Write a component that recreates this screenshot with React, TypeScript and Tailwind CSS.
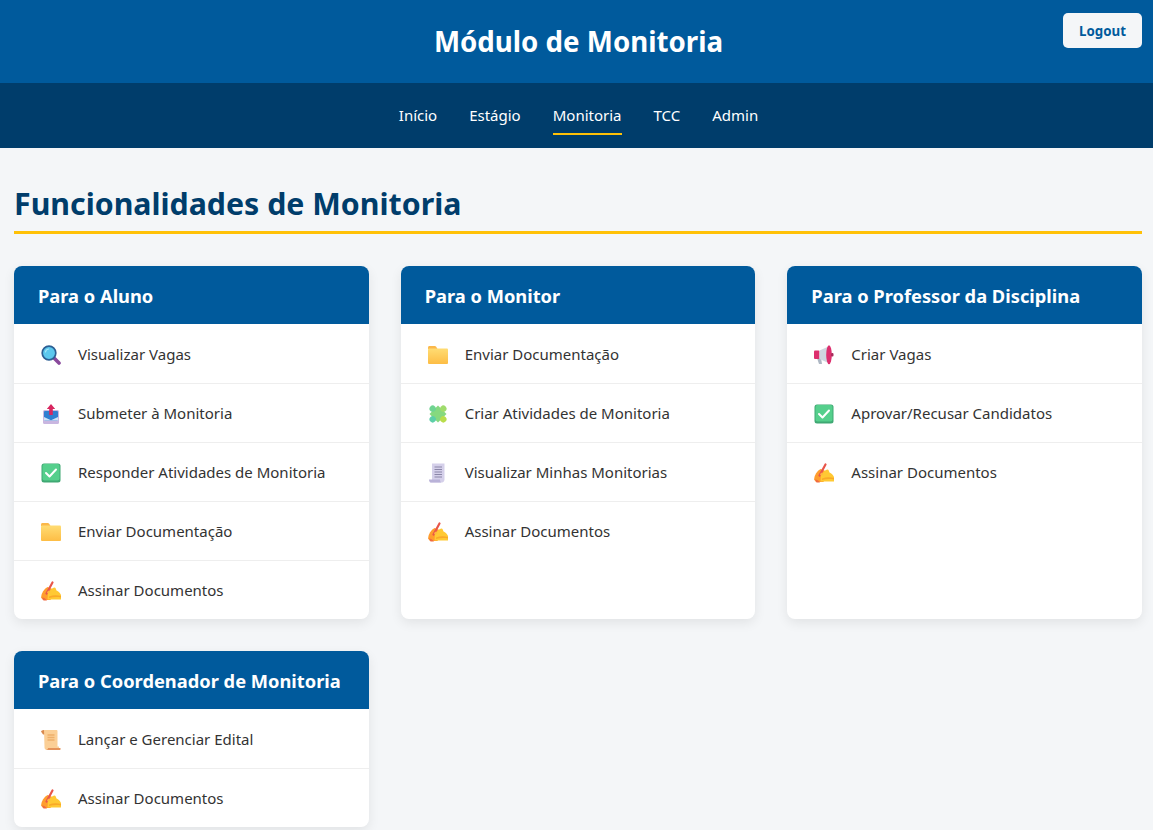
import React from "react";

const MagnifierIcon = () => (
  <svg viewBox="0 0 20 20" className="w-5 h-5">
    <path d="M12.500 12.500l5.500 5.500" stroke="#8a4a9c" strokeWidth="3.600" strokeLinecap="round" />
    <circle cx="8" cy="8" r="6.800" fill="#5cc8ee" stroke="#2c5f94" strokeWidth="1.700" />
    <path d="M4.500 7a3.600 3.600 0 0 1 3-3" stroke="#a9e6f8" strokeWidth="1.200" fill="none" strokeLinecap="round" />
  </svg>
);

const InboxIcon = () => (
  <svg viewBox="0 0 20 20" className="w-5 h-5">
    <rect x="2" y="6" width="16" height="14" rx="1.500" fill="#c9b6e0" />
    <rect x="3" y="7" width="14" height="9.500" rx="1" fill="#2f7fd0" />
    <path d="M3 13l7 3.200 7-3.200v3.500H3z" fill="#cfe2f6" />
    <path d="M10 0l4.200 5h-2.400v6H8.200V5H5.800z" fill="#d8265f" />
  </svg>
);

const CheckIcon = () => (
  <svg viewBox="0 0 20 20" className="w-5 h-5">
    <rect x="0.500" y="0.500" width="19" height="19" rx="2.500" fill="#3fa873" />
    <rect x="1.500" y="1" width="17" height="16.500" rx="2" fill="#55cf8c" />
    <path d="M5 10l3.500 3.500L15 6.500" stroke="#fff" strokeWidth="2" fill="none" strokeLinecap="round" strokeLinejoin="round" />
  </svg>
);

const FolderIcon = () => (
  <svg viewBox="0 0 20 20" className="w-5 h-5">
    <defs>
      <linearGradient id="folderFill" x1="0" y1="0" x2="0" y2="1">
        <stop offset="0" stopColor="#ffdc73" />
        <stop offset="1" stopColor="#fdbd45" />
      </linearGradient>
    </defs>
    <path d="M0 2.500C0 1.700.6 1 1.500 1h5.300c.6 0 1 .3 1.400.8L9.500 4H0z" fill="#fbb84a" />
    <rect x="0" y="3.500" width="20" height="15.500" rx="1" fill="url(#folderFill)" />
  </svg>
);

const SignIcon = () => (
  <svg viewBox="0 0 20 20" className="w-5 h-5">
    <path d="M0 16.500C.5 11.500 3 8 6.500 6l5 2 1 3-3 8H2z" fill="#ff9d2e" />
    <path d="M7 12c2-3 4.500-5.500 6.500-5.500 1.200 0 1.500 1.500 2 3 2 .8 3.500 2.300 4.500 4.500v4.500H6.500z" fill="#ffc933" />
    <path d="M8 15.500c4-1.500 8-1.500 12-.5v1.500c-4-.8-8-.5-12 .5z" fill="#f9a928" />
    <path d="M5.500 12.500L11.500 1.500" stroke="#e8564a" strokeWidth="2.200" strokeLinecap="round" />
    <path d="M7 9.500l2.500 1.500c-1 1.200-2 1.500-3.500 1z" fill="#ffb640" />
    <path d="M1 16.500c2 0 3.500 1 5 3H2.500z" fill="#ef6a42" />
  </svg>
);

const PuzzleIcon = () => (
  <svg viewBox="0 0 20 20" className="w-5 h-5">
    <g transform="rotate(45 10 10)">
      <rect x="4" y="4" width="12" height="12" fill="#86d97f" />
      <circle cx="10" cy="2.500" r="3.200" fill="#9fdc6c" />
      <circle cx="17.500" cy="10" r="3.200" fill="#b9dd4c" />
      <circle cx="10" cy="17.500" r="3.200" fill="#5dcfa8" />
      <circle cx="2.500" cy="10" r="3.200" fill="#70d492" />
    </g>
  </svg>
);

const PageIcon = () => (
  <svg viewBox="0 0 20 20" className="w-5 h-5">
    <path d="M4 .500h12.500v16c0 1.500-1 3-2.500 3H1.500c1.500-.5 2.500-1.500 2.500-3z" fill="#d5d0ea" />
    <path d="M1 16.500h11c0 1.500.5 3 1.500 3H3C1.500 19.500 1 18 1 16.500z" fill="#b9b2d8" />
    <path d="M6.500 4h7.500M6.500 6.500h7.500M6.500 9h7.500M6.500 11.500h7.500M6.500 14h7.500" stroke="#8b86a8" strokeWidth="1" />
  </svg>
);

const MegaphoneIcon = () => (
  <svg viewBox="0 0 20 20" className="w-5 h-5">
    <path d="M3 13h4l1 6H5z" fill="#aeb8c4" />
    <rect x="0" y="5.500" width="5.500" height="8.500" rx="1" fill="#dd2f6e" />
    <path d="M5.500 5.500l9-4v16.500l-9-4z" fill="#cfd6df" />
    <ellipse cx="15" cy="9.700" rx="2.800" ry="9.500" fill="#dd2f6e" />
    <rect x="17" y="8" width="2.500" height="3.500" rx="1" fill="#a82a5a" />
  </svg>
);

const ScrollIcon = () => (
  <svg viewBox="0 0 20 20" className="w-5 h-5">
    <path d="M0 1.500C.5 .3 2 0 5 0v4.500H2z" fill="#d98a4e" />
    <path d="M3 0h12.500c.5 0 1 .5 1 1v15.500H18v3.500H6c-1.500 0-2.500-1-2.500-2.500z" fill="#fbcf96" />
    <path d="M6.500 5h7M6.500 7.500h7M6.500 10h7" stroke="#eeb06b" strokeWidth="1.400" />
    <path d="M5 20h14c.5 0 .5-.5.500-2H7c0 1-.8 2-2 2z" fill="#e5935a" />
  </svg>
);

const icons: Record<string, React.FC> = {
  search: MagnifierIcon,
  inbox: InboxIcon,
  check: CheckIcon,
  folder: FolderIcon,
  sign: SignIcon,
  puzzle: PuzzleIcon,
  page: PageIcon,
  megaphone: MegaphoneIcon,
  scroll: ScrollIcon,
};

const cards = [
  {
    title: "Para o Aluno",
    items: [
      ["search", "Visualizar Vagas"],
      ["inbox", "Submeter à Monitoria"],
      ["check", "Responder Atividades de Monitoria"],
      ["folder", "Enviar Documentação"],
      ["sign", "Assinar Documentos"],
    ],
  },
  {
    title: "Para o Monitor",
    items: [
      ["folder", "Enviar Documentação"],
      ["puzzle", "Criar Atividades de Monitoria"],
      ["page", "Visualizar Minhas Monitorias"],
      ["sign", "Assinar Documentos"],
    ],
  },
  {
    title: "Para o Professor da Disciplina",
    items: [
      ["megaphone", "Criar Vagas"],
      ["check", "Aprovar/Recusar Candidatos"],
      ["sign", "Assinar Documentos"],
    ],
  },
  {
    title: "Para o Coordenador de Monitoria",
    items: [
      ["scroll", "Lançar e Gerenciar Edital"],
      ["sign", "Assinar Documentos"],
    ],
  },
];

const links = ["Início", "Estágio", "Monitoria", "TCC", "Admin"];

const App: React.FC = () => {
  return (
    <div className="min-h-screen bg-[#f4f6f8] font-['Noto_Sans',sans-serif] text-[#333]">
      <header className="relative flex h-[83px] items-center justify-center bg-[#005a9c] pl-1">
        <h1 className="text-[27.700px] font-bold text-white">Módulo de Monitoria</h1>
        <button className="absolute right-[11px] top-[13px] h-[35px] w-[79px] rounded-[5px] bg-[#f4f6f8] pt-[3px] text-[13.300px] font-bold text-[#005a9c]">
          Logout
        </button>
      </header>

      <nav className="flex h-[65px] items-center justify-center gap-8 bg-[#003d6b] pl-1">
        {links.map((link) => (
          <a
            key={link}
            className={
              link === "Monitoria"
                ? "border-b-2 border-[#ffc107] pt-2 pb-[6px] text-[15px] text-white"
                : "border-b-2 border-transparent pt-2 pb-[6px] text-[15px] text-white"
            }
          >
            {link}
          </a>
        ))}
      </nav>

      <main className="pl-[14px] pr-[11px] pt-[33px] pb-[3px]">
        <h2 className="border-b-[3px] border-[#ffc107] pb-[5px] text-[30.300px] font-bold leading-[45px] text-[#003d6b]">
          Funcionalidades de Monitoria
        </h2>

        <div className="mt-8 grid grid-cols-3 gap-8">
          {cards.map((card) => (
            <section
              key={card.title}
              className="overflow-hidden rounded-lg bg-white shadow-[0_4px_12px_rgba(0,0,0,0.08)]"
            >
              <h3 className="flex h-[58px] items-center bg-[#005a9c] px-6 pt-[2px] text-[18.300px] font-bold text-white">
                {card.title}
              </h3>
              <ul className="pt-px">
                {card.items.map(([icon, label], i) => {
                  const Icon = icons[icon];
                  return (
                    <li
                      key={label}
                      className={
                        i === card.items.length - 1
                          ? "flex h-[58px] items-center px-6 text-[15px] text-[#333]"
                          : "flex h-[59px] items-center border-b border-[#eee] px-6 text-[15px] text-[#333]"
                      }
                    >
                      <span className="mr-[14px] flex w-[26px] justify-center pt-[2px]">
                        <Icon />
                      </span>
                      <span className="pt-px">{label}</span>
                    </li>
                  );
                })}
              </ul>
            </section>
          ))}
        </div>
      </main>
    </div>
  );
};

export default App;
